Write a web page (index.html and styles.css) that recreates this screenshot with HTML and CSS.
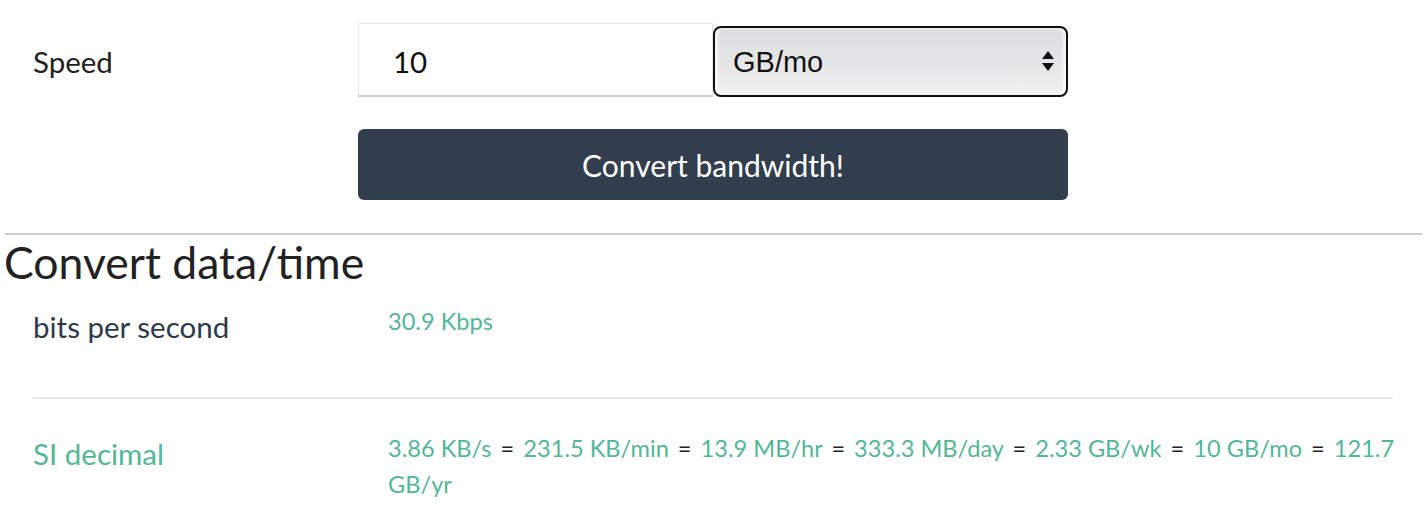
FILE: index.html
```html
<!DOCTYPE html>
<html lang="en">
<head>
<meta charset="utf-8">
<title>Bandwidth converter</title>
<link rel="stylesheet" href="styles.css">
</head>
<body>
<form class="converter">
  <div class="form-row">
    <label class="form-label" for="speed">Speed</label>
    <input class="speed-input" id="speed" type="text" value="10">
    <div class="select-wrap">
      <select class="unit-select">
        <option>GB/mo</option>
      </select>
      <svg class="select-arrows" width="12" height="24" viewBox="0 0 12 24"><path d="M6 2 L12 10 L0 10 Z M0 14 L12 14 L6 22 Z" fill="#111"/></svg>
    </div>
  </div>
  <div class="button-row">
    <button class="convert-btn" type="button">Convert bandwidth!</button>
  </div>
</form>
<hr class="section-rule">
<h2 class="section-title">Convert data/time</h2>
<div class="result-row">
  <div class="result-label">bits per second</div>
  <div class="result-value">30.9 Kbps</div>
</div>
<hr class="row-rule">
<div class="result-row si-row">
  <div class="result-label green">SI decimal</div>
  <div class="result-value"><span class="val">3.86 KB/s</span> <span class="eq">=</span> <span class="val">231.5 KB/min</span> <span class="eq">=</span> <span class="val">13.9 MB/hr</span> <span class="eq">=</span> <span class="val">333.3 MB/day</span> <span class="eq">=</span> <span class="val">2.33 GB/wk</span> <span class="eq">=</span> <span class="val">10 GB/mo</span> <span class="eq">=</span> <span class="val">121.7</span> <span class="val">GB/yr</span></div>
</div>
</body>
</html>
```
FILE: styles.css
```css
* { box-sizing: border-box; }
body {
  margin: 0;
  font-family: Lato, "Open Sans", sans-serif;
  color: #222;
  background: #fff;
}
.converter {
  padding: 23px 0 0 33px;
}
.form-row {
  display: grid;
  grid-template-columns: 325px 355px 355px;
  align-items: center;
}
.form-label {
  font-size: 29.5px;
  color: #222;
  padding-top: 3px;
}
.speed-input {
  height: 74px;
  border: 1px solid #e8e8e8;
  border-bottom: 2px solid #cfcfcf;
  padding: 4px 0 0 34px;
  font-family: Lato, sans-serif;
  font-size: 29.5px;
  color: #111;
  outline: none;
}
.select-wrap {
  position: relative;
  align-self: end;
}
.unit-select {
  appearance: none;
  -webkit-appearance: none;
  width: 355px;
  height: 71px;
  border: 2px solid #111;
  border-radius: 8px;
  padding: 0 0 0 18px;
  font-family: "Liberation Sans", Arial, sans-serif;
  font-size: 29px;
  color: #111;
  background: linear-gradient(#dcdddf, #e4e5e6 50%, #f1f1f1);
  box-shadow: inset 3px 0 3px rgba(255,255,255,0.7), inset -3px 0 3px rgba(255,255,255,0.7);
}
.select-arrows {
  position: absolute;
  right: 14px;
  top: 23px;
  pointer-events: none;
}
.button-row {
  padding: 32px 0 0 325px;
}
.convert-btn {
  width: 710px;
  height: 71px;
  border: 0;
  border-radius: 6px;
  background: #323e4e;
  color: #fff;
  font-family: Lato, sans-serif;
  font-size: 30px;
}
.section-rule {
  margin: 33px 4px 0 5px;
  border: 0;
  border-top: 2px solid #cccccc;
}
.section-title {
  margin: 0 0 0 4px;
  font-size: 44.5px;
  font-weight: 400;
  color: #222;
  line-height: 1.2;
}
.result-row {
  display: grid;
  grid-template-columns: 355px 1fr;
  padding: 0 16px 0 33px;
}
.result-label {
  font-size: 29.5px;
  color: #2d3a4b;
  padding-top: 21px;
}
.result-label.green { color: #52b796; }
.result-value {
  font-size: 23.6px;
  color: #52b796;
  line-height: 36px;
  padding-top: 15px;
}
.si-row .result-value {
  padding-top: 31px;
}
.eq {
  color: #222;
  margin: 0 3px;
}
.row-rule {
  margin: 53px 33px 0 33px;
  border: 0;
  border-top: 2px solid #e6e6e6;
}
.si-row .result-label { padding-top: 37px; }
```
